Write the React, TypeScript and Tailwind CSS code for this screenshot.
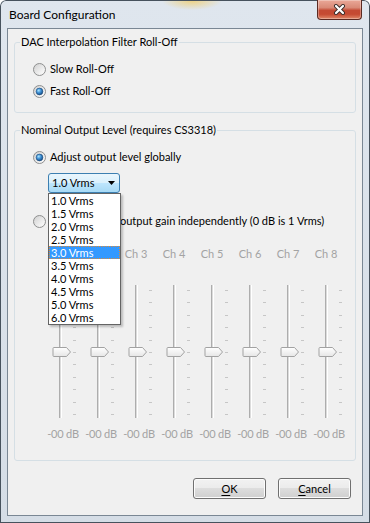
import React from "react";

const channels = [1, 2, 3, 4, 5, 6, 7, 8];
const levels = ["1.0", "1.5", "2.0", "2.5", "3.0", "3.5", "4.0", "4.5", "5.0", "6.0"];
const ticks = Array.from({ length: 11 }, (_, i) => Math.round(5 + i * 12.4));

function Radio({ checked = false }: { checked?: boolean }) {
  return (
    <svg width="13" height="13" viewBox="0 0 13 13" className="shrink-0">
      <defs>
        <linearGradient id="radio-ring" x1="0" y1="0" x2="1" y2="1">
          <stop offset="0" stopColor="#cfcfcf" />
          <stop offset="1" stopColor="#ffffff" />
        </linearGradient>
        <linearGradient id="radio-well" x1="0" y1="0" x2="1" y2="1">
          <stop offset="0" stopColor="#d6d6d6" />
          <stop offset="1" stopColor="#fbfbfb" />
        </linearGradient>
        <radialGradient id="radio-dot" cx="0.38" cy="0.35" r="0.75">
          <stop offset="0" stopColor="#a9e4ff" />
          <stop offset="0.45" stopColor="#3d8fd4" />
          <stop offset="1" stopColor="#0e3d72" />
        </radialGradient>
      </defs>
      <circle cx="6.5" cy="6.5" r="6" fill="url(#radio-ring)" stroke="#8e8f8f" />
      <circle cx="6.5" cy="6.5" r="4.3" fill="url(#radio-well)" />
      {checked && <circle cx="6.5" cy="6.5" r="3.4" fill="url(#radio-dot)" stroke="#1b4a7c" strokeWidth="0.6" />}
    </svg>
  );
}

function Trackbar() {
  return (
    <svg width="38" height="133" viewBox="0 0 38 133" className="shrink-0">
      <defs>
        <linearGradient id="thumb-fill" x1="0" y1="0" x2="0" y2="1">
          <stop offset="0" stopColor="#ffffff" />
          <stop offset="1" stopColor="#e6e6e6" />
        </linearGradient>
      </defs>
      <rect x="18" y="0" width="1" height="133" fill="#adadad" />
      <rect x="19" y="0" width="1" height="133" fill="#dcdcdc" />
      <rect x="20" y="0" width="1" height="133" fill="#ffffff" />
      {ticks.map((y) => (
        <rect key={y} x="32" y={y} width="3" height="1" fill="#c6c6c6" />
      ))}
      <path
        d="M13 62.5 H25.5 L29.5 67 L25.5 71.5 H13 Q12 71.5 12 70.5 V63.5 Q12 62.5 13 62.5 Z"
        fill="url(#thumb-fill)"
        stroke="#a2a2a2"
      />
    </svg>
  );
}

function DlgButton({ children }: { children: React.ReactNode }) {
  return (
    <button className="flex h-[21px] w-[73px] items-center justify-center rounded-[3px] border border-[#707070] bg-[linear-gradient(180deg,#f2f2f2_0%,#ebebeb_50%,#dddddd_50%,#cfcfcf_100%)] shadow-[inset_0_0_0_1px_#fcfcfc]">
      {children}
    </button>
  );
}

export default function App() {
  return (
    <div className="h-[523px] w-[370px] overflow-hidden rounded-t-[6px] bg-[radial-gradient(ellipse_30px_9px_at_192px_1px,rgba(242,205,100,0.75),transparent),linear-gradient(180deg,#dfe6ee_0%,#d5dde6_100%)] font-['Lato','Liberation_Sans',sans-serif] text-[12px] leading-[16px] text-black shadow-[inset_0_0_0_1px_#47525d]">
      {/* title bar */}
      <div className="flex h-[28px] items-start justify-between">
        <span className="ml-[9px] mt-[7px]">Board Configuration</span>
        <div className="mr-[8px] flex h-[20px] w-[45px] items-center justify-center rounded-b-[4px] border border-t-0 border-[#5b2a22] bg-[linear-gradient(180deg,#eaa898_0%,#d98a77_40%,#c44a33_55%,#c54a32_75%,#e08868_100%)] shadow-[inset_0_0_0_1px_rgba(255,255,255,0.3)]">
          <svg width="13" height="11" viewBox="0 0 13 11">
            <path d="M3 2 L10 9 M10 2 L3 9" stroke="#3b2e2b" strokeWidth="4" strokeLinecap="round" />
            <path d="M3 2 L10 9 M10 2 L3 9" stroke="#ffffff" strokeWidth="2.2" strokeLinecap="round" />
          </svg>
        </div>
      </div>

      {/* client area */}
      <div className="mx-[7px] flex h-[488px] flex-col border border-[#7a8794] bg-[#f0f0f0] text-[11px]">
        <fieldset className="mx-[6px] mt-[5px] rounded-[3px] border border-[#d5dfe5] pb-[13px]">
          <legend className="ml-[5px] px-[1px]">DAC Interpolation Filter Roll-Off</legend>
          <div className="ml-[18px] mt-[11px] flex flex-col gap-[6px]">
            <label className="flex h-[16px] items-center gap-[4px]">
              <Radio />
              Slow Roll-Off
            </label>
            <label className="flex h-[16px] items-center gap-[4px]">
              <Radio checked />
              Fast Roll-Off
            </label>
          </div>
        </fieldset>

        <fieldset className="mx-[6px] mt-[9px] rounded-[3px] border border-[#d5dfe5] pb-[18px]">
          <legend className="ml-[5px] px-[1px]">Nominal Output Level (requires CS3318)</legend>
          <label className="ml-[18px] mt-[11px] flex h-[16px] items-center gap-[4px]">
            <Radio checked />
            Adjust output level globally
          </label>

          <div className="relative ml-[33px] mt-[8px] h-[20px] w-[72px]">
            <div className="flex h-full items-center justify-between rounded-[3px] border border-[#3c7fb1] bg-[linear-gradient(180deg,#eaf6fd_0%,#d9f0fc_50%,#bee6fd_50%,#a7d9f5_100%)] pl-[3px] pr-[4px]">
              <span>1.0 Vrms</span>
              <svg width="7" height="4" viewBox="0 0 7 4">
                <path d="M0 0 H7 L3.5 4 Z" fill="#000" />
              </svg>
            </div>
            <ul className="absolute left-0 top-[20px] z-10 w-[73px] border border-[#646464] bg-white shadow-[2px_2px_2px_rgba(0,0,0,0.22)]">
              {levels.map((v) => (
                <li
                  key={v}
                  className={
                    v === "3.0"
                      ? "h-[13px] whitespace-nowrap bg-[#3399ff] pl-[2px] leading-[13px] text-white outline-1 -outline-offset-1 outline-dotted outline-[#d98a3c]"
                      : "h-[13px] whitespace-nowrap pl-[2px] leading-[13px]"
                  }
                >
                  {v} Vrms
                </li>
              ))}
            </ul>
          </div>

          <label className="ml-[18px] mt-[20px] flex h-[16px] items-center gap-[4px] whitespace-nowrap">
            <Radio />
            <span>
              <span className="tracking-[-0.3px]">Adjust channel</span> output gain independently (0 dB is 1 Vrms)
            </span>
          </label>

          <div className="ml-[26px] mt-[17px] flex text-[#a3a3a3]">
            {channels.map((c) => (
              <div key={c} className="w-[38px] text-center">
                Ch {c}
              </div>
            ))}
          </div>

          <div className="ml-[26px] mt-[23px] flex">
            {channels.map((c) => (
              <Trackbar key={c} />
            ))}
          </div>

          <div className="ml-[26px] mt-[8px] flex text-[#a3a3a3]">
            {channels.map((c) => (
              <div key={c} className="flex w-[38px] justify-center whitespace-nowrap pl-[6px] tracking-[-0.2px]">
                -00 dB
              </div>
            ))}
          </div>
        </fieldset>

        <div className="mt-[17px] flex justify-end gap-[12px] pr-[11px]">
          <DlgButton>
            <span className="underline underline-offset-2">O</span>K
          </DlgButton>
          <DlgButton>
            <span className="underline underline-offset-2">C</span>ancel
          </DlgButton>
        </div>
      </div>
    </div>
  );
}
